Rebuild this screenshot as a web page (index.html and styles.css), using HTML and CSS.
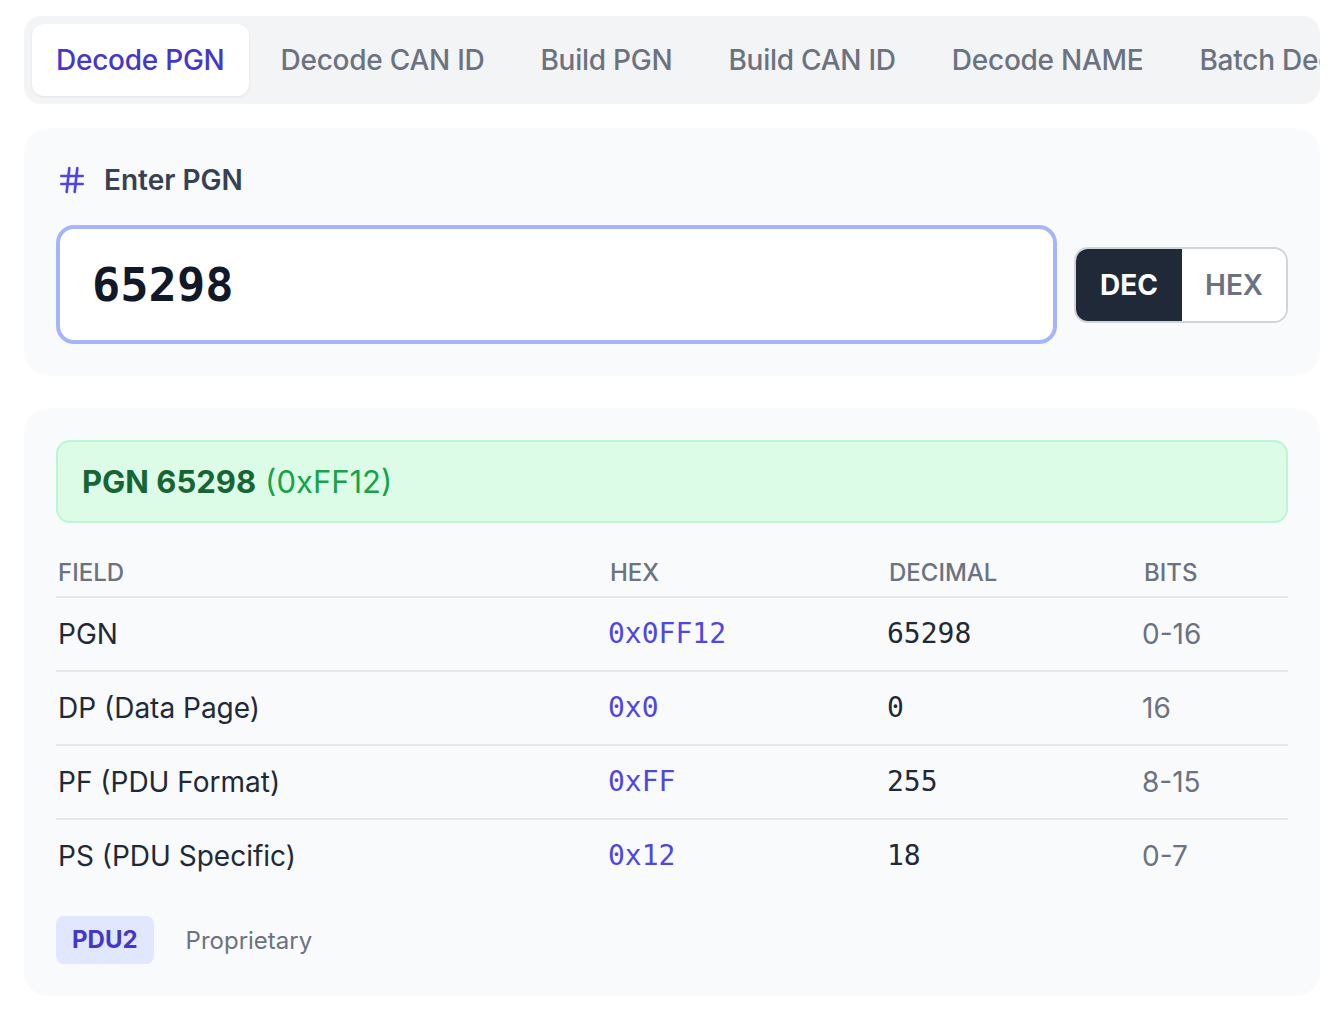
FILE: index.html
```html
<!DOCTYPE html>
<html lang="en">
<head>
  <meta charset="UTF-8" />
  <meta name="viewport" content="width=device-width, initial-scale=1.0" />
  <title>J1939 PGN Tools</title>
  <link rel="stylesheet" href="styles.css">
</head>
<body>
  <div class="page">
    <nav class="tabs">
      <button class="tab active">Decode PGN</button>
      <button class="tab">Decode CAN ID</button>
      <button class="tab">Build PGN</button>
      <button class="tab">Build CAN ID</button>
      <button class="tab">Decode NAME</button>
      <button class="tab">Batch Decode</button>
    </nav>

    <section class="card">
      <label class="field-label" for="pgn">
        <svg class="icon" viewBox="0 0 24 24" fill="none" stroke="currentColor" stroke-width="2" stroke-linecap="round" stroke-linejoin="round">
          <line x1="4" y1="9" x2="20" y2="9" />
          <line x1="4" y1="15" x2="20" y2="15" />
          <line x1="10" y1="3" x2="8" y2="21" />
          <line x1="16" y1="3" x2="14" y2="21" />
        </svg>
        Enter PGN
      </label>
      <div class="input-row">
        <input id="pgn" class="pgn-input" type="text" value="65298" />
        <div class="toggle">
          <button class="on">DEC</button>
          <button>HEX</button>
        </div>
      </div>
    </section>

    <section class="card">
      <div class="banner"><strong>PGN 65298</strong> <span>(0xFF12)</span></div>

      <table class="fields">
        <colgroup>
          <col class="c-field"><col class="c-hex"><col class="c-dec"><col class="c-bits">
        </colgroup>
        <thead>
          <tr><th>Field</th><th>Hex</th><th>Decimal</th><th>Bits</th></tr>
        </thead>
        <tbody>
          <tr><td>PGN</td><td class="hex">0x0FF12</td><td class="dec">65298</td><td class="bits">0-16</td></tr>
          <tr><td>DP (Data Page)</td><td class="hex">0x0</td><td class="dec">0</td><td class="bits">16</td></tr>
          <tr><td>PF (PDU Format)</td><td class="hex">0xFF</td><td class="dec">255</td><td class="bits">8-15</td></tr>
          <tr><td>PS (PDU Specific)</td><td class="hex">0x12</td><td class="dec">18</td><td class="bits">0-7</td></tr>
        </tbody>
      </table>

      <div class="meta">
        <span class="badge">PDU2</span>
        <span class="meta-text">Proprietary</span>
      </div>
    </section>
  </div>
</body>
</html>
```

FILE: styles.css
```css
body {
  margin: 0;
  font-family: Inter, 'Noto Sans', sans-serif;
  background: #fff;
  color: #1f2937;
}

.page {
  padding: 16px 24px;
  display: flex;
  flex-direction: column;
}

/* onglets */
.tabs {
  display: flex;
  gap: 8px;
  padding: 8px;
  background: #f3f4f6;
  border-radius: 18px;
  overflow: hidden;
  margin-bottom: 24px;
}

.tab {
  flex-shrink: 0;
  height: 72px;
  padding: 0 24px;
  border: none;
  border-radius: 12px;
  background: transparent;
  font-family: inherit;
  font-size: 28px;
  font-weight: 500;
  letter-spacing: -0.25px;
  color: #6b7280;
  white-space: nowrap;
  cursor: pointer;
}

.tab.active {
  background: #fff;
  color: #4338ca;
  box-shadow: 0 1px 3px rgba(0,0,0,0.08);
}

.card {
  background: #f9fafb;
  border-radius: 24px;
  padding: 32px;
  margin-bottom: 32px;
}

.field-label {
  display: flex;
  align-items: center;
  gap: 16px;
  height: 40px;
  font-size: 28px;
  font-weight: 600;
  color: #374151;
  margin-bottom: 25px;
}

.icon {
  width: 32px;
  height: 32px;
  color: #4f46e5;
}

.input-row {
  display: flex;
  align-items: center;
  gap: 17px;
}

.pgn-input {
  flex: 1;
  min-width: 0;
  height: 119px;
  box-sizing: border-box;
  padding: 0 32px;
  border: 4px solid #a5b4fc;
  border-radius: 18px;
  background: #fff;
  font-family: 'DejaVu Sans Mono', monospace;
  font-size: 47px;
  font-weight: 700;
  color: #111827;
  outline: none;
}

.toggle {
  display: flex;
  border: 2px solid #d1d5db;
  border-radius: 14px;
  overflow: hidden;
  background: #fff;
}

.toggle button {
  height: 72px;
  padding: 0 24px;
  border: none;
  background: #fff;
  font-family: inherit;
  font-size: 28px;
  font-weight: 600;
  color: #6b7280;
}

.toggle button.on {
  background: #1f2937;
  color: #fff;
  font-weight: 700;
}

.toggle button + button {
  padding: 0 23px;
}

/* résultat */
.banner {
  padding: 0 24px;
  height: 83px;
  box-sizing: border-box;
  display: flex;
  align-items: center;
  gap: 9px;
  background: #dcfce7;
  border: 2px solid #bbf7d0;
  border-radius: 14px;
  font-size: 31px;
  color: #16a34a;
}

.banner strong {
  color: #166534;
  font-weight: 700;
}

.fields {
  width: 100%;
  margin-top: 24px;
  border-collapse: collapse;
  table-layout: fixed;
}

.c-field { width: 552px; }
.c-hex { width: 279px; }
.c-dec { width: 255px; }

.fields th {
  text-align: left;
  padding: 12px 0 9px 2px;
  line-height: 28px;
  font-size: 24px;
  font-weight: 500;
  text-transform: uppercase;
  color: #6b7280;
  border-bottom: 2px solid #e5e7eb;
}

.fields td {
  padding: 20px 0 20px 2px;
  line-height: 32px;
  font-size: 28px;
  color: #1f2937;
  border-bottom: 2px solid #e5e7eb;
}

.fields tbody tr:last-child td {
  border-bottom: none;
}

.fields td.hex,
.fields td.dec {
  font-family: 'DejaVu Sans Mono', monospace;
  font-size: 28px;
  padding-left: 0;
}

.fields td.hex { color: #4f46e5; }
.fields td.bits { color: #6b7280; padding-left: 0; }

.meta {
  display: flex;
  align-items: center;
  gap: 32px;
  margin-top: 24px;
}

.badge {
  padding: 8px 16px;
  line-height: 32px;
  border-radius: 8px;
  background: #e0e7ff;
  color: #4338ca;
  font-size: 24px;
  font-weight: 700;
}

.meta-text {
  font-size: 24px;
  color: #6b7280;
}
```
